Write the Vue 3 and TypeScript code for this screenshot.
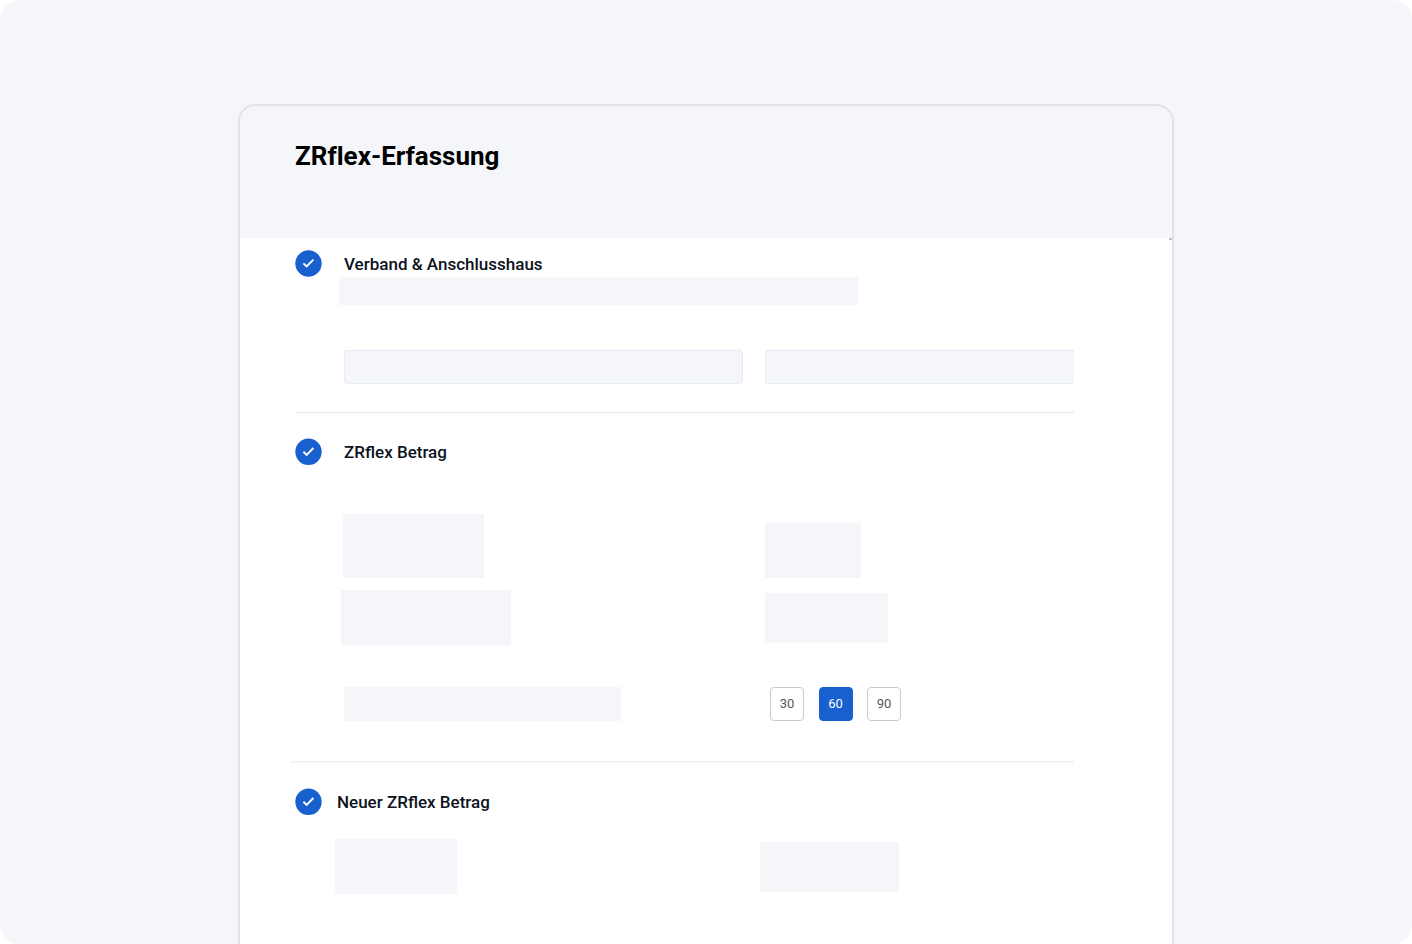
<script setup lang="ts">
import { ref } from 'vue'

const terms: number[] = [30, 60, 90]
const selectedTerm = ref<number>(60)
const association = ref<string>('')
const house = ref<string>('')
</script>

<template>
  <div class="page">
    <main class="card">
      <header class="card-header">
        <h1>ZRflex-Erfassung</h1>
      </header>

      <section class="step step-first">
        <div class="step-head">
          <svg class="check" viewBox="0 0 27 27" aria-hidden="true">
            <circle cx="13.5" cy="13.5" r="13.2" />
            <path d="M8.4 13.4l3.2 3.1 6.8-6.9" />
          </svg>
          <h2 id="step-association">Verband &amp; Anschlusshaus</h2>
        </div>
        <div class="block block-intro"></div>
        <div class="row row-fields">
          <div class="cell cell-field">
            <input v-model="association" type="text" aria-labelledby="step-association" />
          </div>
          <div>
            <input v-model="house" class="open-end" type="text" aria-labelledby="step-association" />
          </div>
        </div>
      </section>

      <hr class="divider" />

      <section class="step">
        <div class="step-head">
          <svg class="check" viewBox="0 0 27 27" aria-hidden="true">
            <circle cx="13.5" cy="13.8" r="13.2" />
            <path d="M8.4 13.8l3.2 3.1 6.8-6.9" />
          </svg>
          <h2 id="step-amount">ZRflex Betrag</h2>
        </div>
        <div class="row row-amount">
          <div class="cell cell-amount"><div class="block block-amount"></div></div>
          <div class="block block-value"></div>
        </div>
        <div class="row row-detail">
          <div class="cell cell-detail"><div class="block block-detail"></div></div>
          <div class="block block-detail-value"></div>
        </div>
        <div class="row row-terms">
          <div class="cell"><div class="block block-label"></div></div>
          <div class="terms" role="group" aria-labelledby="step-amount">
            <button
              v-for="term in terms"
              :key="term"
              type="button"
              :class="{ selected: term === selectedTerm }"
              :aria-pressed="term === selectedTerm"
              @click="selectedTerm = term"
            >
              {{ term }}
            </button>
          </div>
        </div>
      </section>

      <hr class="divider divider-soft" />

      <section class="step">
        <div class="step-head step-head-tight">
          <svg class="check" viewBox="0 0 27 27" aria-hidden="true">
            <circle cx="13.5" cy="13.8" r="13.2" />
            <path d="M8.4 13.8l3.2 3.1 6.8-6.9" />
          </svg>
          <h2>Neuer ZRflex Betrag</h2>
        </div>
        <div class="row row-new">
          <div class="cell cell-new"><div class="block block-new"></div></div>
          <div class="block block-new-value"></div>
        </div>
      </section>
    </main>
  </div>
</template>

<style>
body {
  margin: 0;
  background: #ffffff;
}
</style>

<style scoped>
* {
  box-sizing: border-box;
}

.page {
  display: flex;
  flex-direction: column;
  align-items: center;
  min-height: 100vh;
  padding-top: 104px;
  border-radius: 20px;
  background: #f4f6fa;
  font-family: Roboto, "Liberation Sans", sans-serif;
}

.card {
  flex: 1;
  width: 100%;
  max-width: 936px;
  border: 2px solid #e0e2e5;
  border-bottom: 0;
  border-radius: 18px 18px 0 0;
  background: #ffffff;
  overflow: hidden;
}

.card-header {
  position: relative;
  height: 132px;
  padding: 34px 55px 0;
  background: #f4f6fa;
}

.card-header::after {
  content: "";
  position: absolute;
  top: 100%;
  right: 0;
  width: 3px;
  height: 2px;
  background: #bfc1c4;
}

h1 {
  margin: 0;
  color: #000000;
  font-size: 26px;
  font-weight: 700;
  font-variant-ligatures: none;
  line-height: 32px;
}

.step {
  padding: 25px 98px 0 55px;
}

.step-first {
  padding-top: 12px;
}

.step-head {
  display: flex;
  align-items: center;
  gap: 22px;
}

.step-head-tight {
  gap: 15px;
}

.check {
  flex: none;
  width: 27px;
  height: 27px;
}

.check circle {
  fill: #1860d0;
}

.check path {
  fill: none;
  stroke: #ffffff;
  stroke-width: 1.9;
}

h2 {
  margin: 0;
  color: #0c1220;
  font-size: 17px;
  font-weight: 500;
  line-height: 26px;
}

.divider {
  height: 1px;
  margin: 28px 98px 0 55px;
  border: 0;
  background: #e5e7ea;
}

.divider-soft {
  height: 2px;
  margin: 40px 98px 0 50px;
  background: #f1f2f4;
}

.row {
  display: grid;
  grid-template-columns: 470fr 309fr;
  align-items: center;
}

.cell {
  padding-left: 49px;
}

.cell-field {
  padding-right: 22px;
}

.cell-amount {
  padding-left: 48px;
}

.cell-detail {
  padding-left: 46px;
}

.cell-new {
  padding-left: 40px;
}

.row-fields {
  margin-top: 45px;
}

.row-amount {
  align-items: end;
  margin-top: 49px;
}

.row-detail {
  margin-top: 12px;
}

.row-terms {
  margin-top: 42px;
}

.row-new {
  grid-template-columns: 465fr 314fr;
  margin-top: 24px;
}

input {
  display: block;
  width: 100%;
  height: 34px;
  padding: 0 12px;
  border: 1px solid #e4edf5;
  border-radius: 3px;
  background: #f4f6fa;
  color: #0c1220;
  font: inherit;
  font-size: 14px;
}

.open-end {
  border-right: 0;
  border-radius: 3px 0 0 3px;
}

.block {
  max-width: 100%;
  background: #f4f6fa;
}

.block-intro {
  width: 519px;
  height: 28px;
  margin-left: 44px;
}

.block-amount {
  width: 141px;
  height: 64px;
}

.block-value {
  width: 96px;
  height: 55px;
}

.block-detail {
  width: 170px;
  height: 55px;
}

.block-detail-value {
  width: 123px;
  height: 50px;
}

.block-label {
  width: 277px;
  height: 34px;
}

.block-new {
  width: 122px;
  height: 55px;
}

.block-new-value {
  width: 139px;
  height: 50px;
}

.terms {
  display: flex;
  justify-content: space-between;
  width: 136px;
  padding-left: 5px;
}

button {
  width: 34px;
  height: 34px;
  padding: 0;
  border: 1px solid #c9cbce;
  border-radius: 4px;
  background: #ffffff;
  color: #55575b;
  font: inherit;
  font-size: 13px;
  line-height: 32px;
  cursor: pointer;
}

button.selected {
  border-color: #1860d0;
  background: #1860d0;
  color: #ffffff;
}
</style>
